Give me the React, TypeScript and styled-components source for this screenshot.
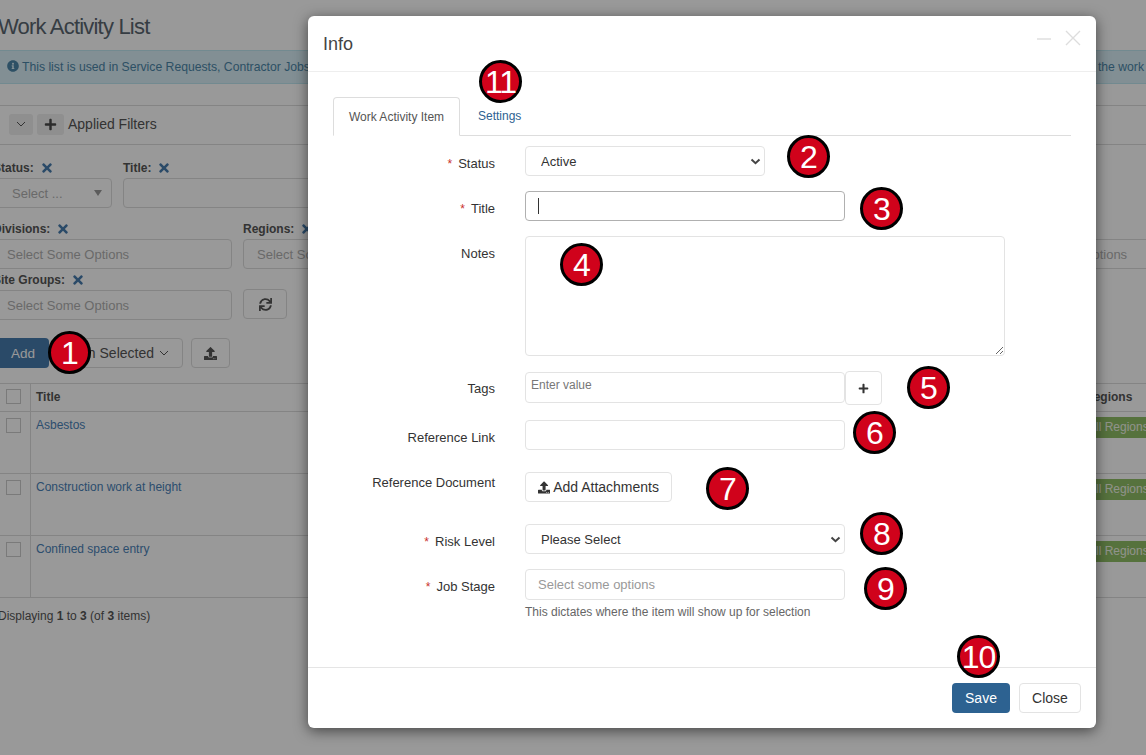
import React from "react";
import styled, { createGlobalStyle } from "styled-components";
import { FaInfoCircle, FaPlus, FaSync, FaTimes, FaUpload } from "react-icons/fa";

const Global = createGlobalStyle`
  html, body { margin: 0; padding: 0; height: 755px; overflow: hidden; background: #fff; }
  * { box-sizing: border-box; }
  body { font-family: "Liberation Sans", Arial, sans-serif; color: #333; }
`;

const Screen = styled.div`
  position: relative;
  width: 1146px;
  height: 755px;
  overflow: hidden;
  background: #fff;
`;

const Backdrop = styled.div`
  position: absolute;
  inset: 0;
  background: rgba(0, 0, 0, 0.4);
`;

const Page = styled.div`
  display: flex;
  flex-direction: column;
  width: 1160px;
  margin-left: -7px;
  font-size: 12px;
  color: #555;
`;

const PageTitle = styled.h1`
  margin: 14px 0 0 5px;
  height: 36px;
  font-size: 22px;
  line-height: 26px;
  font-weight: 400;
  letter-spacing: -0.8px;
  color: #5a6670;
`;

const Alert = styled.div`
  display: flex;
  justify-content: space-between;
  align-items: center;
  height: 34px;
  padding: 0 8px 0 13px;
  background: #d9eef7;
  border: 1px solid #bfe6f1;
  color: #4b86a8;
  font-size: 12.2px;
  svg { margin-right: 3px; vertical-align: -1px; }
`;

const FilterBar = styled.div`
  display: flex;
  align-items: center;
  gap: 2px;
  height: 40px;
  margin-top: 21px;
  padding: 0 0 2px 16px;
  border-top: 1px solid #ddd;
  border-bottom: 1px solid #ddd;
  font-size: 14px;
`;

const GhostButton = styled.span<{ $w: number }>`
  display: inline-flex;
  align-items: center;
  justify-content: center;
  width: ${(p) => p.$w}px;
  height: 21px;
  margin-right: 2px;
  background: #eee;
  border-radius: 3px;
  color: #4a4a4a;
`;

const FilterRow = styled.div<{ $top: number }>`
  display: flex;
  align-items: flex-end;
  gap: 11px;
  margin-top: ${(p) => p.$top}px;
`;

const Field = styled.div<{ $w: number }>`
  display: flex;
  flex-direction: column;
  width: ${(p) => p.$w}px;
  flex: none;
`;

const FieldLabel = styled.label`
  display: flex;
  align-items: center;
  gap: 6px;
  height: 14px;
  margin-bottom: 3px;
  font-size: 12px;
  font-weight: 700;
  color: #555;
  svg { color: #477cae; }
`;

const FieldBox = styled.div<{ $pad?: number }>`
  display: flex;
  align-items: center;
  justify-content: space-between;
  height: 30px;
  padding: 0 6px 0 ${(p) => p.$pad ?? 13}px;
  border: 1px solid #ddd;
  border-radius: 4px;
  background: #fff;
  font-size: 13px;
  color: #b0b0b0;
`;

const Caret = styled.span`
  width: 0;
  height: 0;
  margin-right: 3px;
  border-left: 4px solid transparent;
  border-right: 4px solid transparent;
  border-top: 6px solid #999;
`;

const RefreshButton = styled.button`
  display: flex;
  align-items: center;
  justify-content: center;
  width: 44px;
  height: 30px;
  margin-bottom: 1px;
  background: #fff;
  border: 1px solid #ddd;
  border-radius: 4px;
  color: #555;
`;

const Actions = styled.div`
  display: flex;
  gap: 8px;
  margin-top: 18px;
`;

const PrimaryBack = styled.button`
  width: 56px;
  height: 30px;
  border: 0;
  border-radius: 4px;
  background: #477cae;
  color: #fff;
  font: 13.5px "Liberation Sans", sans-serif;
  padding: 0 0 0 4px;
`;

const OutlineBack = styled.button`
  display: flex;
  align-items: center;
  justify-content: flex-end;
  gap: 5px;
  width: 126px;
  height: 30px;
  padding: 0 13px 0 0;
  background: #fff;
  border: 1px solid #ddd;
  border-radius: 4px;
  color: #555;
  white-space: nowrap;
  font: 14px "Liberation Sans", sans-serif;
`;

const UploadBack = styled.button`
  display: flex;
  align-items: center;
  justify-content: center;
  width: 39px;
  height: 30px;
  padding: 0;
  background: #fff;
  border: 1px solid #ddd;
  border-radius: 4px;
  color: #555;
`;

const Table = styled.div`
  margin-top: 15px;
  border-top: 1px solid #ddd;
`;

const TableRow = styled.div<{ $h: number }>`
  display: grid;
  grid-template-columns: 38px 1fr 74px;
  height: ${(p) => p.$h}px;
  border-bottom: 1px solid #ddd;
`;

const CheckCell = styled.div<{ $top: number }>`
  padding: ${(p) => p.$top}px 0 0 13px;
  border-right: 1px solid #ddd;
`;

const CheckBox = styled.span`
  display: block;
  width: 15px;
  height: 15px;
  border: 1px solid #ccc;
  background: #fff;
`;

const TitleHead = styled.div`
  padding: 6px 0 0 5px;
  font-weight: 700;
  font-size: 12px;
`;

const RowLink = styled.a`
  padding: 6px 0 0 5px;
  color: #4a82b8;
  font-size: 12px;
`;

const RegionHead = styled.div`
  padding: 6px 0 0 6px;
  font-weight: 700;
  font-size: 12px;
`;

const RegionCell = styled.div`
  padding-top: 5px;
`;

const RegionTag = styled.span`
  display: block;
  height: 21px;
  padding-left: 9px;
  line-height: 21px;
  white-space: nowrap;
  background: #90bf66;
  color: #f0f5e8;
  font-size: 12px;
`;

const Displaying = styled.div`
  margin: 11px 0 0 5px;
  font-size: 12px;
`;

const Modal = styled.div`
  position: absolute;
  left: 308px;
  top: 16px;
  width: 788px;
  height: 712px;
  display: flex;
  flex-direction: column;
  background: #fff;
  border-radius: 6px;
  box-shadow: 0 3px 14px rgba(0, 0, 0, 0.55);
`;

const ModalHeader = styled.header`
  display: flex;
  align-items: flex-start;
  justify-content: space-between;
  height: 56px;
  flex: none;
  padding: 0 15px;
  border-bottom: 1px solid #eee;
`;

const ModalTitle = styled.h2`
  margin: 18px 0 0;
  font-size: 18px;
  line-height: 20px;
  font-weight: 400;
  color: #444;
`;

const WindowButtons = styled.div`
  display: flex;
  gap: 14px;
  margin-top: 14px;
  svg { display: block; }
`;

const ModalBody = styled.div`
  flex: 1;
  padding: 25px 25px 0;
`;

const Tabs = styled.nav`
  display: flex;
  height: 39px;
  border-bottom: 1px solid #ddd;
  font-size: 12px;
`;

const ActiveTab = styled.span`
  width: 127px;
  height: 39px;
  padding-top: 12px;
  text-align: center;
  color: #555;
  background: #fff;
  border: 1px solid #ddd;
  border-bottom-color: #fff;
  border-radius: 4px 4px 0 0;
`;

const Tab = styled.a`
  padding: 12px 0 0 18px;
  color: #2d6291;
`;

const FormRow = styled.div<{ $top: number }>`
  display: flex;
  margin-top: ${(p) => p.$top}px;
`;

const RowLabel = styled.label<{ $top?: number }>`
  width: 162px;
  flex: none;
  margin-right: 30px;
  padding-top: ${(p) => p.$top ?? 10}px;
  text-align: right;
  font-size: 13px;
  line-height: 15px;
  color: #333;
`;

const Required = styled.span`
  margin-right: 6px;
  color: #c9302c;
  font-size: 12px;
`;

const ControlStack = styled.div`
  display: flex;
  flex-direction: column;
`;

const TextInput = styled.input<{ $h?: number; $focus?: boolean }>`
  display: block;
  width: 320px;
  height: ${(p) => p.$h ?? 30}px;
  padding: 0 12px;
  background: #fff;
  border: 1px solid ${(p) => (p.$focus ? "#b0b0b0" : "#e3e3e3")};
  border-radius: 4px;
  font: 13px "Liberation Sans", sans-serif;
  outline: none;
  &::placeholder { color: #999; opacity: 1; }
`;

const TagInput = styled(TextInput)`
  padding: 0 0 6px 5px;
  font-size: 12px;
  &::placeholder { color: #777; }
`;

const NotesArea = styled.textarea`
  display: block;
  width: 480px;
  height: 120px;
  background: #fff;
  border: 1px solid #e3e3e3;
  border-radius: 4px;
  outline: none;
`;

const SelectWrap = styled.div<{ $w: number }>`
  position: relative;
  width: ${(p) => p.$w}px;
  svg { position: absolute; right: 4px; top: 12px; pointer-events: none; }
`;

const NativeSelect = styled.select`
  display: block;
  width: 100%;
  height: 30px;
  padding: 0 0 0 15px;
  background: #fff;
  border: 1px solid #e3e3e3;
  border-radius: 4px;
  appearance: none;
  font: 13px "Liberation Sans", sans-serif;
  color: #333;
  outline: none;
`;

const TextCaret = styled.span`
  position: absolute;
  left: 13px;
  top: 7px;
  width: 1px;
  height: 16px;
  background: #333;
`;

const InputGroup = styled.div`
  display: flex;
  align-items: flex-start;
`;

const PlusButton = styled.button`
  display: flex;
  align-items: center;
  justify-content: center;
  width: 37px;
  height: 34px;
  margin-top: -1px;
  background: #fff;
  border: 1px solid #e3e3e3;
  border-radius: 4px;
  color: #333;
`;

const AttachButton = styled.button`
  display: flex;
  align-items: center;
  gap: 3px;
  width: 147px;
  height: 30px;
  padding: 0 12px;
  background: #fff;
  border: 1px solid #e3e3e3;
  border-radius: 4px;
  color: #333;
  white-space: nowrap;
  font: 14px "Liberation Sans", sans-serif;
`;

const Hint = styled.div`
  margin-top: 5px;
  font-size: 12px;
  line-height: 14px;
  color: #666;
`;

const ModalFooter = styled.footer`
  display: flex;
  justify-content: flex-end;
  gap: 9px;
  height: 61px;
  flex: none;
  padding: 15px 15px 0;
  border-top: 1px solid #e5e5e5;
`;

const SaveButton = styled.button`
  width: 58px;
  height: 30px;
  padding: 0;
  background: #2d6291;
  border: 0;
  border-radius: 4px;
  color: #fff;
  font: 14px "Liberation Sans", sans-serif;
`;

const CloseButton = styled.button`
  width: 62px;
  height: 30px;
  padding: 0;
  background: #fff;
  border: 1px solid #e3e3e3;
  border-radius: 4px;
  color: #333;
  font: 14px "Liberation Sans", sans-serif;
`;

const Badge = styled.span<{ $x: number; $y: number }>`
  position: absolute;
  left: ${(p) => p.$x - 21}px;
  top: ${(p) => p.$y - 21}px;
  display: flex;
  align-items: center;
  justify-content: center;
  width: 43px;
  height: 43px;
  background: #d0021b;
  border: 3px solid #000;
  border-radius: 50%;
  color: #fff;
  font-size: 32px;
  letter-spacing: -1px;
  line-height: 1;
`;

const Chevron = () => (
  <svg width="11" height="7" viewBox="0 0 11 7" fill="none">
    <path d="M1.5 1.5 5.5 5.2 9.5 1.5" stroke="#444" strokeWidth="2" />
  </svg>
);

const ThinChevron = () => (
  <svg width="10" height="6" viewBox="0 0 10 6" fill="none">
    <path d="M1 1 5 5 9 1" stroke="#555" strokeWidth="1" />
  </svg>
);

const badges: [string, number, number][] = [
  ["1", 69, 352],
  ["11", 500, 81],
  ["2", 808, 156],
  ["3", 881, 208],
  ["4", 581, 264],
  ["5", 928, 387],
  ["6", 874, 432],
  ["7", 727, 488],
  ["8", 881, 533],
  ["9", 885, 588],
  ["10", 978, 656],
];

const rows = ["Asbestos", "Construction work at height", "Confined space entry"];

export default function App() {
  return (
    <Screen>
      <Global />
      <Page>
        <PageTitle>Work Activity List</PageTitle>
        <Alert>
          <span>
            <FaInfoCircle size={12} />
            This list is used in Service Requests, Contractor Jobs
          </span>
          <span>the work</span>
        </Alert>
        <FilterBar>
          <GhostButton $w={24}>
            <ThinChevron />
          </GhostButton>
          <GhostButton $w={27}>
            <FaPlus size={13} />
          </GhostButton>
          <span>Applied Filters</span>
        </FilterBar>
        <FilterRow $top={16}>
          <Field $w={119}>
            <FieldLabel>
              Status: <FaTimes size={14} />
            </FieldLabel>
            <FieldBox $pad={18}>
              Select ...
              <Caret />
            </FieldBox>
          </Field>
          <Field $w={400}>
            <FieldLabel>
              Title: <FaTimes size={14} />
            </FieldLabel>
            <FieldBox />
          </Field>
        </FilterRow>
        <FilterRow $top={14}>
          <Field $w={239}>
            <FieldLabel>
              Divisions: <FaTimes size={14} />
            </FieldLabel>
            <FieldBox>Select Some Options</FieldBox>
          </Field>
          <Field $w={737}>
            <FieldLabel>
              Regions: <FaTimes size={14} />
            </FieldLabel>
            <FieldBox>Select Some Options</FieldBox>
          </Field>
          <Field $w={209}>
            <FieldLabel />
            <FieldBox>Select Some Options</FieldBox>
          </Field>
        </FilterRow>
        <FilterRow $top={4}>
          <Field $w={239}>
            <FieldLabel>
              Site Groups: <FaTimes size={14} />
            </FieldLabel>
            <FieldBox>Select Some Options</FieldBox>
          </Field>
          <RefreshButton>
            <FaSync size={13} />
          </RefreshButton>
        </FilterRow>
        <Actions>
          <PrimaryBack>Add</PrimaryBack>
          <OutlineBack>
            With Selected <ThinChevron />
          </OutlineBack>
          <UploadBack>
            <FaUpload size={13} />
          </UploadBack>
        </Actions>
        <Table>
          <TableRow $h={28}>
            <CheckCell $top={5}>
              <CheckBox />
            </CheckCell>
            <TitleHead>Title</TitleHead>
            <RegionHead>Regions</RegionHead>
          </TableRow>
          {rows.map((r) => (
            <TableRow $h={62} key={r}>
              <CheckCell $top={6}>
                <CheckBox />
              </CheckCell>
              <RowLink>{r}</RowLink>
              <RegionCell>
                <RegionTag>All Regions</RegionTag>
              </RegionCell>
            </TableRow>
          ))}
        </Table>
        <Displaying>
          Displaying <b>1</b> to <b>3</b> (of <b>3</b> items)
        </Displaying>
      </Page>
      <Backdrop />
      <Modal>
        <ModalHeader>
          <ModalTitle>Info</ModalTitle>
          <WindowButtons>
            <svg width="14" height="16" viewBox="0 0 14 16">
              <path d="M0 9h14" stroke="#ddd" strokeWidth="1.4" />
            </svg>
            <svg width="16" height="16" viewBox="0 0 16 16">
              <path d="M1 1 15 15M15 1 1 15" stroke="#ddd" strokeWidth="1.4" />
            </svg>
          </WindowButtons>
        </ModalHeader>
        <ModalBody>
          <Tabs>
            <ActiveTab>Work Activity Item</ActiveTab>
            <Tab>Settings</Tab>
          </Tabs>
          <FormRow $top={10}>
            <RowLabel>
              <Required>*</Required>Status
            </RowLabel>
            <SelectWrap $w={240}>
              <NativeSelect defaultValue="Active">
                <option>Active</option>
              </NativeSelect>
              <Chevron />
            </SelectWrap>
          </FormRow>
          <FormRow $top={15}>
            <RowLabel>
              <Required>*</Required>Title
            </RowLabel>
            <SelectWrap $w={320}>
              <TextInput $focus />
              <TextCaret />
            </SelectWrap>
          </FormRow>
          <FormRow $top={15}>
            <RowLabel>Notes</RowLabel>
            <NotesArea />
          </FormRow>
          <FormRow $top={16}>
            <RowLabel $top={9}>Tags</RowLabel>
            <InputGroup>
              <TagInput placeholder="Enter value" $h={31} />
              <PlusButton>
                <FaPlus size={11} />
              </PlusButton>
            </InputGroup>
          </FormRow>
          <FormRow $top={15}>
            <RowLabel>Reference Link</RowLabel>
            <TextInput />
          </FormRow>
          <FormRow $top={22}>
            <RowLabel $top={3}>Reference Document</RowLabel>
            <AttachButton>
              <FaUpload size={13} /> Add Attachments
            </AttachButton>
          </FormRow>
          <FormRow $top={22}>
            <RowLabel>
              <Required>*</Required>Risk Level
            </RowLabel>
            <SelectWrap $w={320}>
              <NativeSelect defaultValue="Please Select">
                <option>Please Select</option>
              </NativeSelect>
              <Chevron />
            </SelectWrap>
          </FormRow>
          <FormRow $top={15}>
            <RowLabel>
              <Required>*</Required>Job Stage
            </RowLabel>
            <ControlStack>
              <TextInput placeholder="Select some options" $h={31} />
              <Hint>This dictates where the item will show up for selection</Hint>
            </ControlStack>
          </FormRow>
        </ModalBody>
        <ModalFooter>
          <SaveButton>Save</SaveButton>
          <CloseButton>Close</CloseButton>
        </ModalFooter>
      </Modal>
      {badges.map(([n, x, y]) => (
        <Badge key={n} $x={x} $y={y}>
          {n}
        </Badge>
      ))}
    </Screen>
  );
}
